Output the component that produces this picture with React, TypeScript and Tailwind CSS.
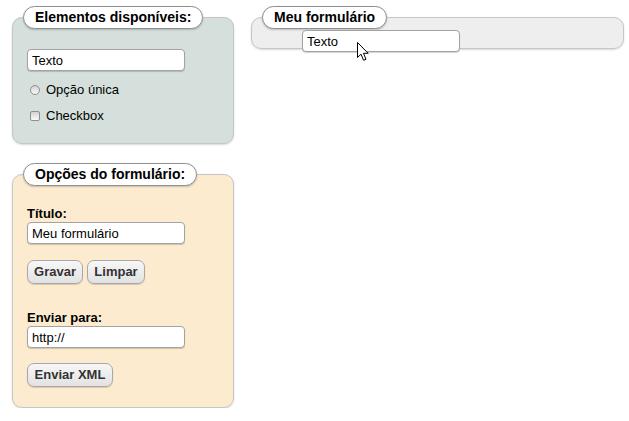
import React from "react";

const inputCls =
  "block w-[158px] h-[22px] border border-[#a3a3a3] rounded-[4px] bg-white px-[4px] text-[13px] leading-[20px] text-black shadow-[0_1px_1px_rgba(0,0,0,0.18)] outline-none";

const btnCls =
  "h-[24px] border border-[#a8a8a8] rounded-[7px] bg-gradient-to-b from-[#f7f7f7] to-[#e2e2e2] text-[13px] font-bold text-[#333] leading-[22px] text-center shadow-[0_1px_1px_rgba(0,0,0,0.15)]";

const legendCls =
  "h-[23px] px-[11px] border border-[#8f8f8f] rounded-[12px] bg-white text-[14px] font-bold leading-[21px] text-black shadow-[0_1px_2px_rgba(0,0,0,0.2)]";

function Cursor() {
  return (
    <svg
      width="13"
      height="20"
      viewBox="0 0 13 20"
      className="absolute left-[55px] top-[12px]"
    >
      <path
        d="M0.5 0.5 L0.5 15.5 L4 12.2 L6.6 18.3 L9 17.3 L6.5 11.3 L11.2 11.3 Z"
        fill="#fff"
        stroke="#000"
        strokeWidth="1"
        strokeLinejoin="miter"
      />
    </svg>
  );
}

export default function App() {
  return (
    <div className="flex items-start gap-[17px] pl-[12px] pt-[6px] font-['Liberation_Sans',Arial,sans-serif] text-black">
      <div className="flex flex-col gap-[19px] w-[222px]">
        <fieldset className="m-0 border border-[#c6c6c6] rounded-[10px] bg-[#d5e0dc] px-[10px] pb-[19px] shadow-[0_1px_2px_rgba(0,0,0,0.15)]">
          <legend className={legendCls}>Elementos disponíveis:</legend>
          <div className="pl-[4px]">
            <input className={inputCls + " mt-[20px]"} defaultValue="Texto" readOnly />
            <div className="mt-[11px] flex items-center h-[16px]">
              <span className="ml-[3px] w-[10px] h-[10px] rounded-full border border-[#8f8f8f] bg-gradient-to-b from-[#d2d2d2] to-[#fbfbfb]" />
              <span className="ml-[6px] text-[13px] leading-[16px]">Opção única</span>
            </div>
            <div className="mt-[10px] flex items-center h-[16px]">
              <span className="ml-[3px] w-[10px] h-[10px] rounded-[2px] border border-[#8f8f8f] bg-gradient-to-b from-[#d2d2d2] to-[#fbfbfb]" />
              <span className="ml-[6px] text-[13px] leading-[16px]">Checkbox</span>
            </div>
          </div>
        </fieldset>

        <fieldset className="m-0 border border-[#c6c6c6] rounded-[10px] bg-[#fdebd0] px-[10px] pb-[20px] shadow-[0_1px_2px_rgba(0,0,0,0.15)]">
          <legend className={legendCls}>Opções do formulário:</legend>
          <div className="pl-[4px]">
            <div className="mt-[20px] text-[13px] font-bold leading-[16px]">Título:</div>
            <input className={inputCls} defaultValue="Meu formulário" readOnly />
            <div className="mt-[16px] flex gap-[4px]">
              <button className={btnCls + " w-[56px]"}>Gravar</button>
              <button className={btnCls + " w-[58px]"}>Limpar</button>
            </div>
            <div className="mt-[26px] text-[13px] font-bold leading-[16px]">Enviar para:</div>
            <input className={inputCls} defaultValue="http://" readOnly />
            <div className="mt-[15px] flex">
              <button className={btnCls + " w-[86px]"}>Enviar XML</button>
            </div>
          </div>
        </fieldset>
      </div>

      <fieldset className="m-0 w-[373px] h-[43px] border border-[#c6c6c6] rounded-[10px] bg-[#eeeeee] px-[10px] shadow-[0_1px_2px_rgba(0,0,0,0.15)]">
        <legend className={legendCls}>Meu formulário</legend>
        <div className="relative ml-[40px] mt-[1px] w-[156px]">
          <input className={inputCls + " w-[156px]"} defaultValue="Texto" readOnly />
          <Cursor />
        </div>
      </fieldset>
    </div>
  );
}
